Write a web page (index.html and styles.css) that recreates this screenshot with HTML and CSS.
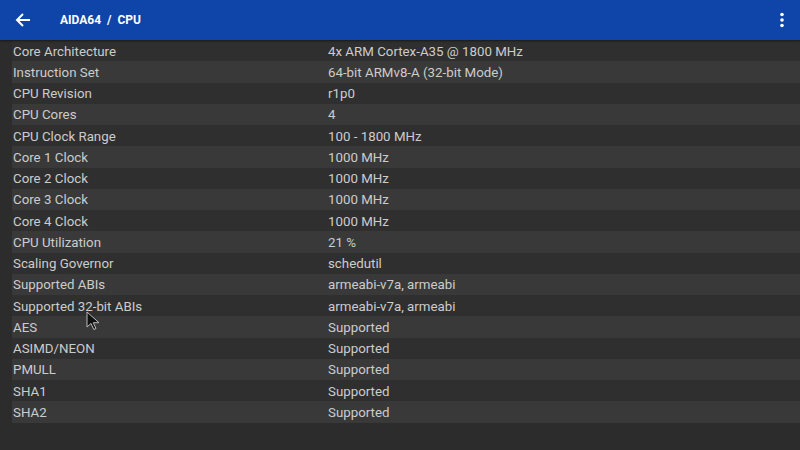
FILE: index.html
```html
<!DOCTYPE html>
<html>
<head>
<meta charset="utf-8">
<link rel="stylesheet" href="styles.css">
</head>
<body>
<div class="app">
  <header class="bar">
    <svg class="back" width="16" height="16" viewBox="0 0 16 16"><path d="M15 8H2.5M8 2L2 8l6 6" fill="none" stroke="#fff" stroke-width="2"/></svg>
    <div class="title">AIDA64&nbsp;&nbsp;/&nbsp;&nbsp;CPU</div>
    <svg class="more" width="4" height="16" viewBox="0 0 4 16"><circle cx="2" cy="2.5" r="1.8" fill="#fff"/><circle cx="2" cy="8" r="1.8" fill="#fff"/><circle cx="2" cy="13.5" r="1.8" fill="#fff"/></svg>
  </header>
  <div class="list">
    <div class="row"><span class="k">Core Architecture</span><span class="v">4x ARM Cortex-A35 @ 1800 MHz</span></div>
    <div class="row"><span class="k">Instruction Set</span><span class="v">64-bit ARMv8-A (32-bit Mode)</span></div>
    <div class="row"><span class="k">CPU Revision</span><span class="v">r1p0</span></div>
    <div class="row"><span class="k">CPU Cores</span><span class="v">4</span></div>
    <div class="row"><span class="k">CPU Clock Range</span><span class="v">100 - 1800 MHz</span></div>
    <div class="row"><span class="k">Core 1 Clock</span><span class="v">1000 MHz</span></div>
    <div class="row"><span class="k">Core 2 Clock</span><span class="v">1000 MHz</span></div>
    <div class="row"><span class="k">Core 3 Clock</span><span class="v">1000 MHz</span></div>
    <div class="row"><span class="k">Core 4 Clock</span><span class="v">1000 MHz</span></div>
    <div class="row"><span class="k">CPU Utilization</span><span class="v">21 %</span></div>
    <div class="row"><span class="k">Scaling Governor</span><span class="v">schedutil</span></div>
    <div class="row"><span class="k">Supported ABIs</span><span class="v">armeabi-v7a, armeabi</span></div>
    <div class="row"><span class="k">Supported 32-bit ABIs</span><span class="v">armeabi-v7a, armeabi</span></div>
    <div class="row"><span class="k">AES</span><span class="v">Supported</span></div>
    <div class="row"><span class="k">ASIMD/NEON</span><span class="v">Supported</span></div>
    <div class="row"><span class="k">PMULL</span><span class="v">Supported</span></div>
    <div class="row"><span class="k">SHA1</span><span class="v">Supported</span></div>
    <div class="row"><span class="k">SHA2</span><span class="v">Supported</span></div>
  </div>
  <svg class="cursor" width="14" height="20" viewBox="0 0 14 20"><path d="M1 1v15l4-3.5 2.8 6 2.2-1-2.7-5.8H13z" fill="#111" stroke="#bbb" stroke-width="1"/></svg>
</div>
</body>
</html>
```
FILE: styles.css
```css
html, body { margin: 0; padding: 0; }
body {
  width: 800px; height: 450px; overflow: hidden;
  background: #2c2c2c;
  font-family: Roboto, "Noto Sans", sans-serif;
}
.app { position: relative; width: 800px; height: 450px; }
.bar {
  height: 40px;
  background: #0f45a8;
  display: flex; align-items: center;
  box-shadow: 0 1px 2px rgba(0,0,0,0.5);
  position: relative; z-index: 1;
}
.back { margin-left: 15px; }
.title {
  margin-left: 29px;
  color: #fff; font-weight: 700; font-size: 12px;
  flex: 1;
}
.more { margin-right: 16px; }
.list { padding-left: 12px; }
.row {
  height: 21.25px;
  display: flex; align-items: center;
  padding-top: 1px; box-sizing: border-box;
  font-size: 13.3px; color: #cccccc;
  background: #2f2f2f;
}
.row:nth-child(even) { background: #393939; }
.k { width: 315px; padding-left: 1px; }
.v { flex: 1; }
.cursor { position: absolute; left: 86px; top: 311px; }
```
